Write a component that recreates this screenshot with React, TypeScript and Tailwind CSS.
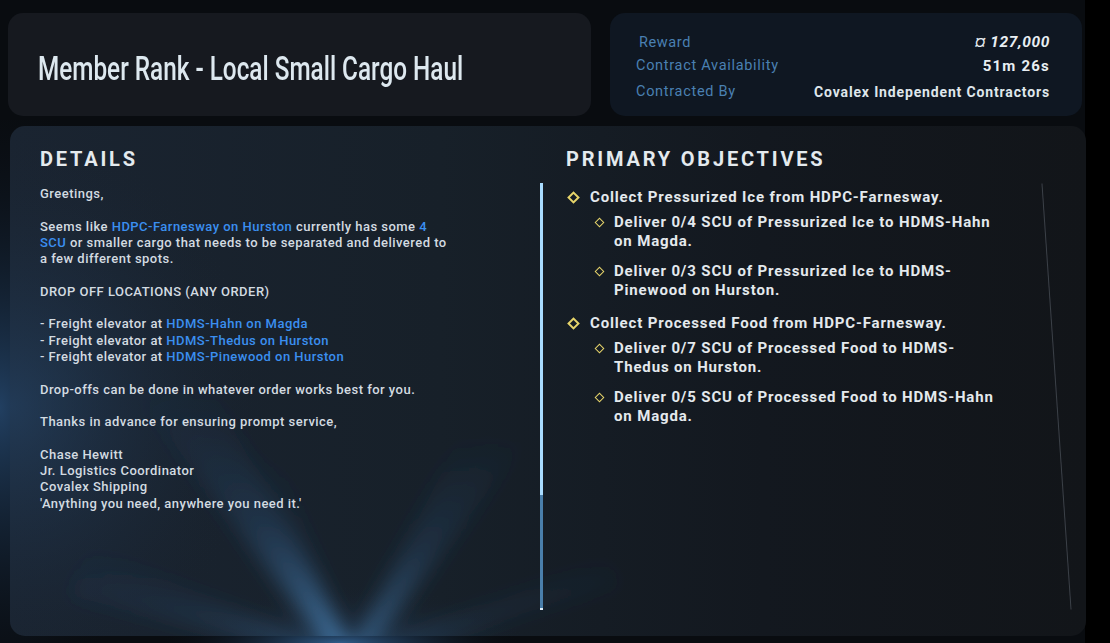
import React from "react";

const body = "font-['Roboto',sans-serif]";

function Link({ children }: { children: React.ReactNode }) {
  return <span className="text-[#3b8ff0]">{children}</span>;
}

function Diamond({ size }: { size: "lg" | "sm" }) {
  return size === "lg" ? (
    <span className="inline-block w-[9px] h-[9px] rotate-45 border-[2px] border-[#e6d46a] shrink-0" />
  ) : (
    <span className="inline-block w-[7px] h-[7px] rotate-45 border-[1.5px] border-[#e6d46a] shrink-0" />
  );
}

function Objective({ lines, sub, className }: { lines: string[]; sub?: boolean; className?: string }) {
  return (
    <div className={`flex items-start ${sub ? "pl-[26px]" : "pl-[1px]"} ${className ?? ""}`}>
      <div className={`flex items-center justify-center h-[19px] ${sub ? "w-[14px]" : "w-[12px]"}`}>
        <Diamond size={sub ? "sm" : "lg"} />
      </div>
      <div className={`${sub ? "pl-[8px]" : "pl-[11px]"} text-[15px] leading-[19px] font-bold tracking-[0.85px] text-[#e4e9ed] whitespace-nowrap`}>
        {lines.map((l, i) => (
          <div key={i}>{l}</div>
        ))}
      </div>
    </div>
  );
}

export default function App() {
  return (
    <div className={`relative w-[1110px] h-[643px] overflow-hidden bg-[#090c10] ${body}`}>
      {/* background glow */}
      <svg className="absolute inset-0 pointer-events-none" width="1110" height="643" viewBox="0 0 1110 643">
        <defs>
          <radialGradient id="leftglow" cx="0" cy="0.55" r="0.6">
            <stop offset="0" stopColor="#24456a" stopOpacity="0.9" />
            <stop offset="1" stopColor="#0b1018" stopOpacity="0" />
          </radialGradient>
          <radialGradient id="botglow" cx="0.5" cy="1" r="0.5">
            <stop offset="0" stopColor="#356699" stopOpacity="0.9" />
            <stop offset="1" stopColor="#0b1018" stopOpacity="0" />
          </radialGradient>
        </defs>
        <rect x="0" y="120" width="260" height="523" fill="url(#leftglow)" />
        <rect x="160" y="580" width="360" height="63" fill="url(#botglow)" />
        <rect x="1085" y="0" width="25" height="643" fill="#000" />
      </svg>

      <div className="relative flex flex-col">
        {/* top row */}
        <div className="flex pt-[13px] pl-[8px] gap-[19px]">
          <div className="w-[583px] h-[103px] rounded-[15px] bg-[#16191f] flex items-center pl-[30px] pt-[7px]">
            <span className="inline-block origin-left scale-x-[0.715] text-[34px] font-medium text-[#dde8ef] whitespace-nowrap font-['Roboto',sans-serif]">
              Member Rank - Local Small Cargo Haul
            </span>
          </div>
          <div className="w-[472px] h-[103px] rounded-[15px] bg-[#0f1722] pl-[26px] pr-[32px] pt-[20px] flex flex-col">
            <div className="flex justify-between items-center h-[20px]">
              <span className="text-[14.5px] text-[#4a80b2] pl-[3px] tracking-[0.6px]">Reward</span>
              <span className="text-[15.5px] font-bold italic text-[#e8eef2] tracking-[0.6px]">¤ 127,000</span>
            </div>
            <div className="flex justify-between items-center h-[20px] mt-[3px]">
              <span className="text-[14.5px] text-[#4a80b2] tracking-[0.7px]">Contract Availability</span>
              <span className="text-[15px] font-bold text-[#e8eef2] tracking-[1.2px]">51m 26s</span>
            </div>
            <div className="flex justify-between items-center h-[20px] mt-[6px]">
              <span className="text-[14.5px] text-[#4a80b2] tracking-[0.7px]">Contracted By</span>
              <span className="text-[14px] font-bold text-[#dfe6eb] tracking-[0.85px]">Covalex Independent Contractors</span>
            </div>
          </div>
        </div>

        {/* main card */}
        <div className="relative ml-[10px] mt-[10px] w-[1076px] h-[510px] rounded-[15px] overflow-hidden bg-[linear-gradient(90deg,#1a2431_0%,#172029_40%,#13181f_70%,#121519_100%)]">
          <svg className="absolute inset-0 pointer-events-none" width="1076" height="510" viewBox="0 0 1076 510">
            <defs>
              <linearGradient id="ray2" x1="0" y1="1" x2="0" y2="0">
                <stop offset="0" stopColor="#4f8cc2" stopOpacity="0.9" />
                <stop offset="0.5" stopColor="#2f5a86" stopOpacity="0.35" />
                <stop offset="1" stopColor="#2a4d74" stopOpacity="0" />
              </linearGradient>
              <radialGradient id="lg2" cx="0" cy="0.55" r="0.55">
                <stop offset="0" stopColor="#27496f" stopOpacity="0.6" />
                <stop offset="1" stopColor="#1a2330" stopOpacity="0" />
              </radialGradient>
              <radialGradient id="bot2" cx="0.5" cy="1" r="0.5">
                <stop offset="0" stopColor="#2e5a88" stopOpacity="0.7" />
                <stop offset="1" stopColor="#1a2330" stopOpacity="0" />
              </radialGradient>
              <filter id="blur2" x="-50%" y="-50%" width="200%" height="200%">
                <feGaussianBlur stdDeviation="10" />
              </filter>
            </defs>
            <rect x="0" y="0" width="460" height="510" fill="url(#lg2)" />
            <rect x="150" y="380" width="380" height="160" fill="url(#bot2)" />
            <g filter="url(#blur2)">
              <polygon points="345,530 325,530 120,260 200,260" fill="url(#ray2)" opacity="0.85" />
              <polygon points="352,530 340,530 450,310 520,310" fill="url(#ray2)" opacity="0.75" />
              <polygon points="338,530 330,530 230,330 270,330" fill="url(#ray2)" opacity="0.4" />
              <polygon points="330,530 318,530 60,470 80,420" fill="url(#ray2)" opacity="0.4" />
              <polygon points="360,530 350,530 600,430 610,460" fill="url(#ray2)" opacity="0.35" />
            </g>
          </svg>

          <div className="relative flex h-full">
            {/* details column */}
            <div className="w-[530px] pl-[30px] pt-[21px] shrink-0">
              <div className="text-[20px] leading-[24px] font-bold tracking-[2.8px] text-[#e4eaee]">DETAILS</div>
              <div className="mt-[15px] text-[13px] leading-[16.3px] font-medium tracking-[0.47px] text-[#d3dbe1] whitespace-nowrap">
                <div>Greetings,</div>
                <div className="h-[16.3px]" />
                <div>
                  Seems like <Link>HDPC-Farnesway on Hurston</Link> currently has some <Link>4</Link>
                </div>
                <div>
                  <Link>SCU</Link> or smaller cargo that needs to be separated and delivered to
                </div>
                <div>a few different spots.</div>
                <div className="h-[16.3px]" />
                <div>DROP OFF LOCATIONS (ANY ORDER)</div>
                <div className="h-[16.3px]" />
                <div>
                  - Freight elevator at <Link>HDMS-Hahn on Magda</Link>
                </div>
                <div>
                  - Freight elevator at <Link>HDMS-Thedus on Hurston</Link>
                </div>
                <div>
                  - Freight elevator at <Link>HDMS-Pinewood on Hurston</Link>
                </div>
                <div className="h-[16.3px]" />
                <div>Drop-offs can be done in whatever order works best for you.</div>
                <div className="h-[16.3px]" />
                <div>Thanks in advance for ensuring prompt service,</div>
                <div className="h-[16.3px]" />
                <div>Chase Hewitt</div>
                <div>Jr. Logistics Coordinator</div>
                <div>Covalex Shipping</div>
                <div>'Anything you need, anywhere you need it.'</div>
              </div>
            </div>

            {/* scrollbar */}
            <div className="shrink-0 w-[3px] mt-[57px] h-[427px] flex flex-col">
              <div className="h-[312px] bg-[#a9dcff]" />
              <div className="flex-1 bg-[#4a7fab]" />
              <div className="h-[2px] bg-[#dfeefa]" />
            </div>

            {/* objectives column */}
            <div className="flex-1 pl-[23px] pt-[21px] flex">
              <div className="flex-1">
                <div className="text-[20px] leading-[24px] font-bold tracking-[2.8px] text-[#e4eaee]">PRIMARY OBJECTIVES</div>
                <div className="mt-[17px]">
                  <Objective lines={["Collect Pressurized Ice from HDPC-Farnesway."]} />
                  <Objective sub className="mt-[6px]" lines={["Deliver 0/4 SCU of Pressurized Ice to HDMS-Hahn", "on Magda."]} />
                  <Objective sub className="mt-[11px]" lines={["Deliver 0/3 SCU of Pressurized Ice to HDMS-", "Pinewood on Hurston."]} />
                  <Objective className="mt-[14px]" lines={["Collect Processed Food from HDPC-Farnesway."]} />
                  <Objective sub className="mt-[6px]" lines={["Deliver 0/7 SCU of Processed Food to HDMS-", "Thedus on Hurston."]} />
                  <Objective sub className="mt-[11px]" lines={["Deliver 0/5 SCU of Processed Food to HDMS-Hahn", "on Magda."]} />
                </div>
              </div>
              <div className="shrink-0 w-[1px] mt-[36px] h-[427px] mr-[29px] bg-[#3c4148] -rotate-[3.9deg]" />
            </div>
          </div>
        </div>
      </div>
    </div>
  );
}
